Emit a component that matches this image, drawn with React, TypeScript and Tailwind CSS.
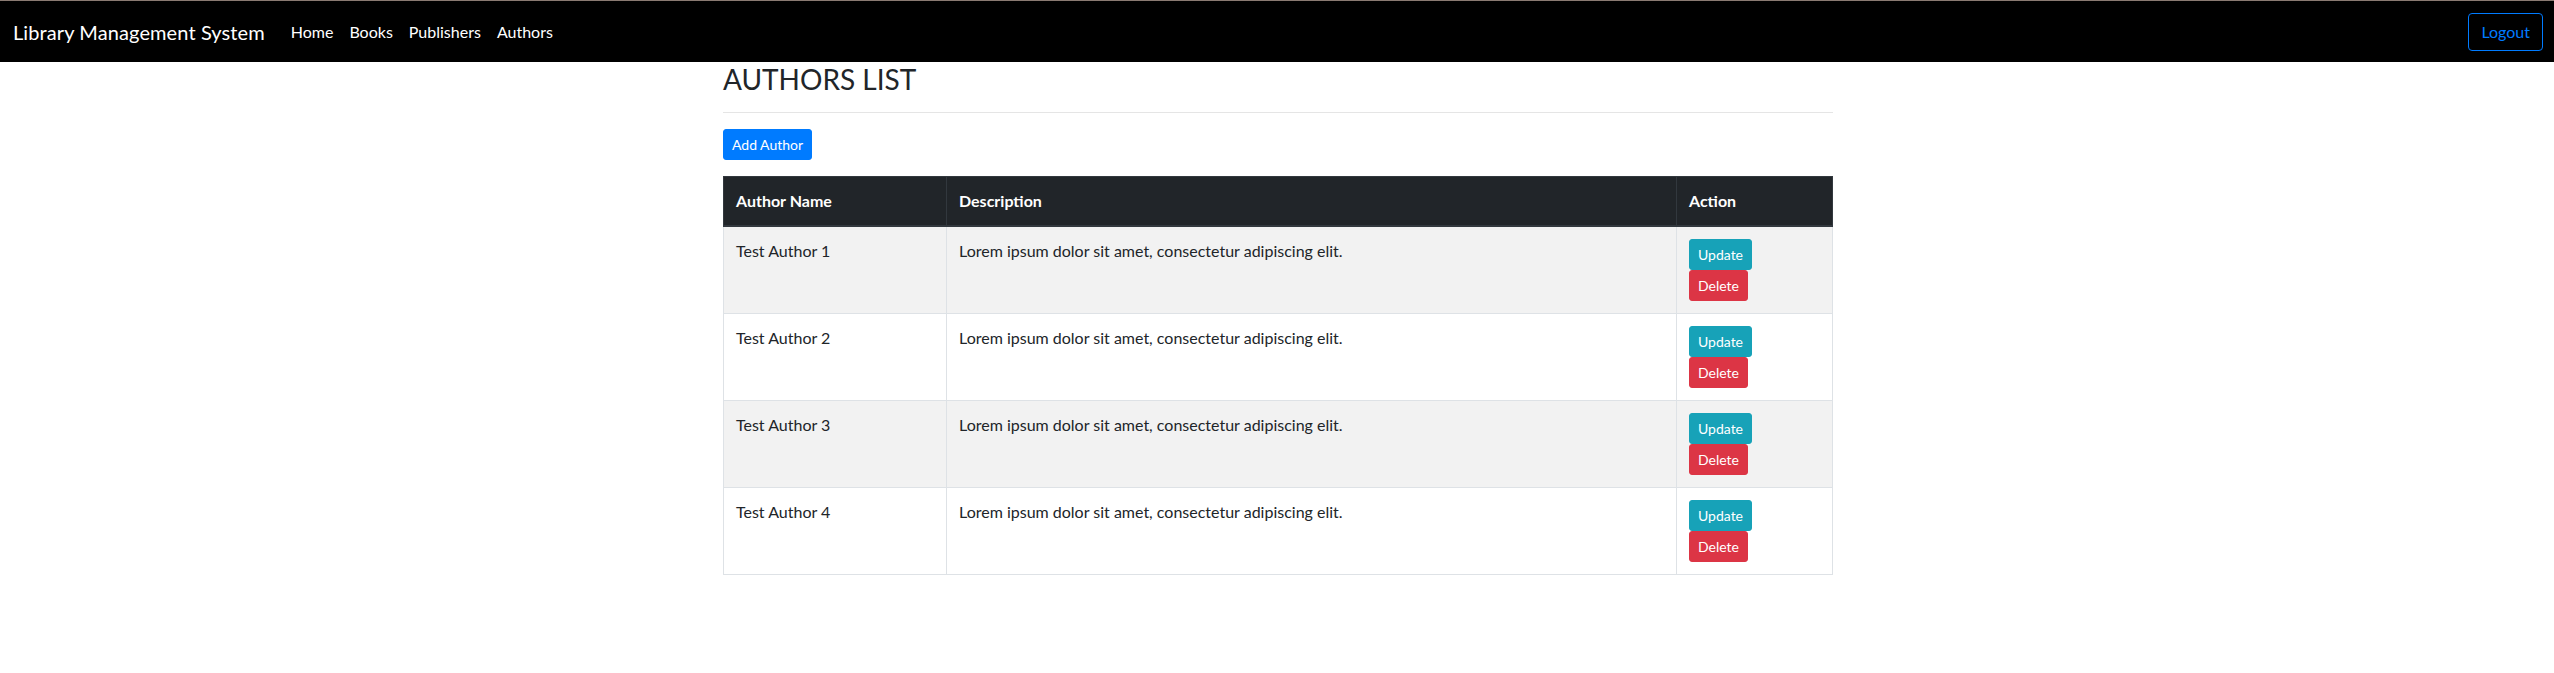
import React from 'react'

const authors = [
  { name: 'Test Author 1', description: 'Lorem ipsum dolor sit amet, consectetur adipiscing elit.' },
  { name: 'Test Author 2', description: 'Lorem ipsum dolor sit amet, consectetur adipiscing elit.' },
  { name: 'Test Author 3', description: 'Lorem ipsum dolor sit amet, consectetur adipiscing elit.' },
  { name: 'Test Author 4', description: 'Lorem ipsum dolor sit amet, consectetur adipiscing elit.' },
]

function Navbar() {
  return (
    <nav className="h-[62px] bg-black border-t border-[#8a7a72] flex items-center pl-[13px] pr-[11px]">
      <a className="text-[20px] leading-[30px] text-white mr-[18px] tracking-[0.1px]">Library Management System</a>
      <ul className="flex items-center">
        <li><a className="block px-2 text-[16px] leading-6 text-white">Home</a></li>
        <li><a className="block px-2 text-[16px] leading-6 text-white">Books</a></li>
        <li><a className="block px-2 text-[16px] leading-6 text-white">Publishers</a></li>
        <li><a className="block px-2 text-[16px] leading-6 text-white">Authors</a></li>
      </ul>
      <button className="ml-auto h-[38px] px-3 border border-[#007bff] rounded text-[#007bff] text-[16px] leading-6">
        Logout
      </button>
    </nav>
  )
}

function AuthorTable() {
  return (
    <table className="w-full border-collapse border border-[#dee2e6] table-fixed">
      <thead>
        <tr className="bg-[#212529] text-white">
          <th className="w-[223px] text-left font-bold px-3 py-3 leading-6 border border-[#32383e] border-b-2">Author Name</th>
          <th className="w-[730px] text-left font-bold px-3 py-3 leading-6 border border-[#32383e] border-b-2">Description</th>
          <th className="text-left font-bold px-3 py-3 leading-6 border border-[#32383e] border-b-2">Action</th>
        </tr>
      </thead>
      <tbody>
        {authors.map((a, i) => (
          <tr key={a.name} className={i % 2 === 0 ? 'bg-[#f2f2f2]' : 'bg-white'}>
            <td className="align-top px-3 py-3 leading-6 border border-[#dee2e6]">{a.name}</td>
            <td className="align-top px-3 py-3 leading-6 border border-[#dee2e6]">{a.description}</td>
            <td className="align-top px-3 py-3 border border-[#dee2e6]">
              <div className="flex flex-col items-start">
                <button className="bg-[#17a2b8] text-white text-[14px] leading-[21px] px-2 py-1 rounded-[3px] border border-[#17a2b8]">Update</button>
                <button className="bg-[#dc3545] text-white text-[14px] leading-[21px] px-2 py-1 rounded-[3px] border border-[#dc3545]">Delete</button>
              </div>
            </td>
          </tr>
        ))}
      </tbody>
    </table>
  )
}

export default function App() {
  return (
    <div className="h-[673px] overflow-hidden bg-white text-[#212529] text-[16px] font-['Segoe_UI',Lato,'Noto_Sans',sans-serif]">
      <Navbar />
      <div className="w-[1112px] mx-auto pl-[2px]">
        <h3 className="text-[28px] leading-[34px] font-normal text-[#212529]">AUTHORS LIST</h3>
        <hr className="mt-4 mb-4 border-t border-[#e5e5e5]" />
        <button className="bg-[#007bff] text-white text-[14px] leading-[21px] px-2 py-1 rounded-[3px] border border-[#007bff]">
          Add Author
        </button>
        <div className="mt-4">
          <AuthorTable />
        </div>
      </div>
    </div>
  )
}
